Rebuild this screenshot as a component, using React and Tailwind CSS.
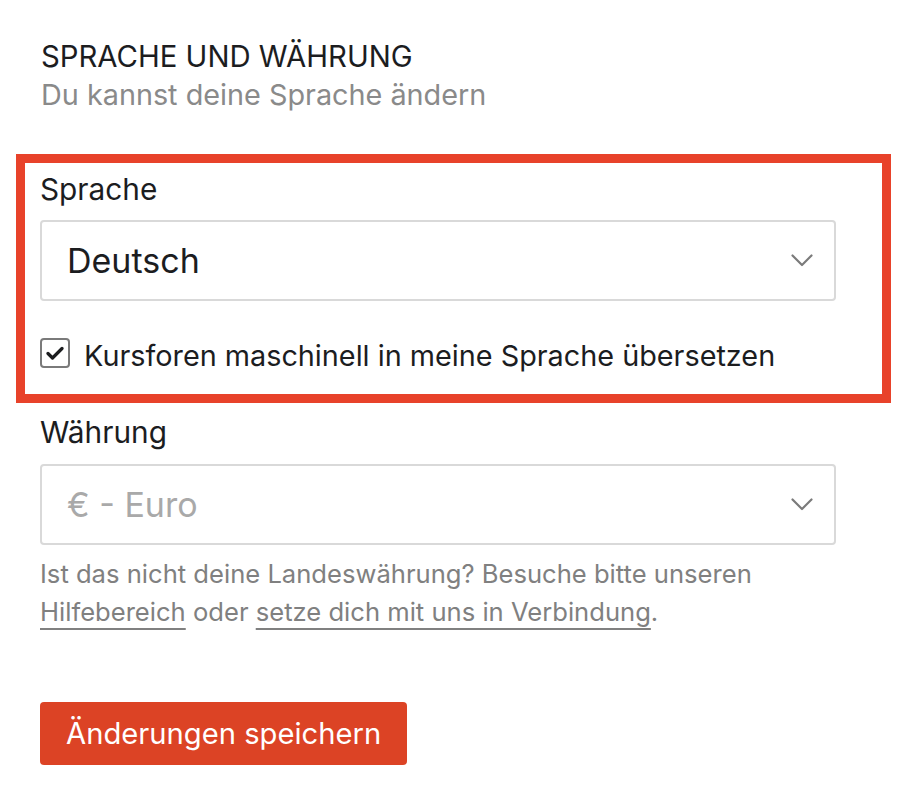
import React from "react";

function Chevron() {
  return (
    <svg width="22" height="13" viewBox="0 0 22 13" fill="none" className="shrink-0">
      <path d="M1.5 1.5 L11 11 L20.5 1.5" stroke="#7b7b7b" strokeWidth="2.2" strokeLinecap="round" strokeLinejoin="round" />
    </svg>
  );
}

export default function App() {
  return (
    <div className="min-h-[810px] w-[912px] bg-white text-[#1c1d1f]" style={{ fontFamily: "Inter, 'Noto Sans', sans-serif" }}>
      <div className="pl-[41px] pt-[39px]">
        <h1 className="text-[29.3px] leading-[36px] font-normal">SPRACHE UND WÄHRUNG</h1>
        <p className="mt-[2px] text-[28.8px] leading-[36px] text-[#8a8a8a]">Du kannst deine Sprache ändern</p>
      </div>

      <div className="ml-[16px] mt-[41px] w-[875px] border-[9px] border-[#e8422a] pl-[15px] pt-[8px] pb-[20px]">
        <label className="block text-[29.8px] leading-[36px]">Sprache</label>
        <div className="mt-[13px] flex h-[81px] w-[796px] items-center justify-between rounded-[4px] border-2 border-[#d9d9d9] pl-[25px] pr-[21px]">
          <span className="text-[34px] leading-[40px] text-[#1c1d1f]">Deutsch</span>
          <Chevron />
        </div>
        <div className="mt-[37px] flex items-start gap-[14px]">
          <div className="flex h-[30px] w-[30px] items-center justify-center rounded-[4px] border-2 border-[#7a7a7a] bg-white">
            <svg width="18" height="14" viewBox="0 0 18 14" fill="none">
              <path d="M2 7.5 L6.5 12 L16 2.5" stroke="#1c1d1f" strokeWidth="3.2" strokeLinecap="round" strokeLinejoin="round" />
            </svg>
          </div>
          <span className="text-[28.8px] leading-[36px]">Kursforen maschinell in meine Sprache übersetzen</span>
        </div>
      </div>

      <div className="pl-[40px]">
        <label className="mt-[11px] block text-[29.8px] leading-[36px]">Währung</label>
        <div className="mt-[14px] flex h-[81px] w-[796px] items-center justify-between rounded-[4px] border-2 border-[#d9d9d9] pl-[25px] pr-[21px]">
          <span className="text-[34px] leading-[40px] text-[#a9a9a9]">€ - Euro</span>
          <Chevron />
        </div>
        <p className="mt-[10px] w-[796px] text-[25.6px] leading-[38px] text-[#808080]">
          Ist das nicht deine Landeswährung? Besuche bitte unseren{" "}
          <a className="underline decoration-2 underline-offset-[7px]">Hilfebereich</a> oder{" "}
          <a className="underline decoration-2 underline-offset-[7px]">setze dich mit uns in Verbindung</a>.
        </p>
        <button className="mt-[71px] flex h-[63px] items-center rounded-[4px] bg-[#dc4325] px-[26px] text-[29.2px] leading-[36px] text-white">
          Änderungen speichern
        </button>
      </div>
    </div>
  );
}
